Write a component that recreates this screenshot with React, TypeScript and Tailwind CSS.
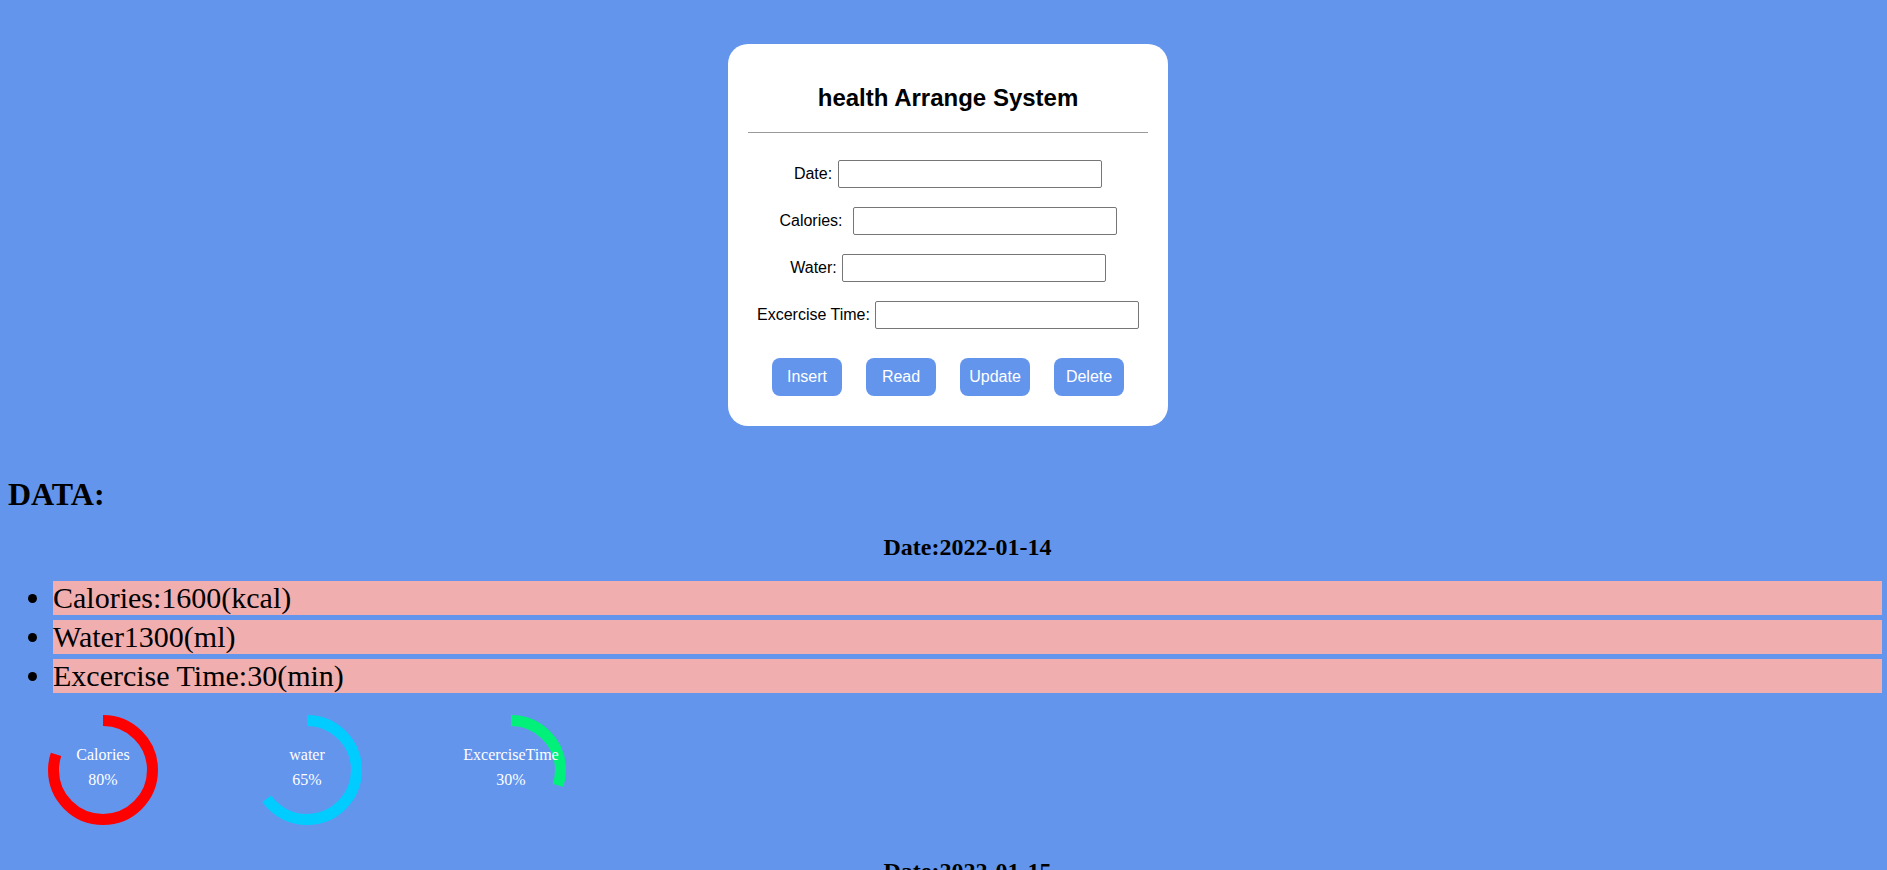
import React from 'react';

interface DayRecord {
  date: string;
  calories: number;
  water: number;
  exercise: number;
  rings: { label: string; percent: number; color: string }[];
}

const records: DayRecord[] = [
  {
    date: '2022-01-14',
    calories: 1600,
    water: 1300,
    exercise: 30,
    rings: [
      { label: 'Calories', percent: 80, color: '#ff0000' },
      { label: 'water', percent: 65, color: '#00ccff' },
      { label: 'ExcerciseTime', percent: 30, color: '#00f07a' },
    ],
  },
  {
    date: '2022-01-15',
    calories: 1800,
    water: 1500,
    exercise: 45,
    rings: [
      { label: 'Calories', percent: 90, color: '#ff0000' },
      { label: 'water', percent: 75, color: '#00ccff' },
      { label: 'ExcerciseTime', percent: 45, color: '#00f07a' },
    ],
  },
];

const fields = [
  { label: 'Date:', gap: 'ml-[6px]' },
  { label: 'Calories:', gap: 'ml-[10px]' },
  { label: 'Water:', gap: 'ml-[5px]' },
  { label: 'Excercise Time:', gap: 'ml-[5px]' },
];

const buttons = ['Insert', 'Read', 'Update', 'Delete'];

// 가운데에 라벨이 있는 원형 진행 링
function Ring({ label, percent, color }: { label: string; percent: number; color: string }) {
  const r = 49.5;
  const c = 2 * Math.PI * r;

  return (
    <div className="relative h-[110px] w-[110px]">
      <svg width="110" height="110" viewBox="0 0 110 110">
        <circle
          cx="55"
          cy="55"
          r={r}
          fill="none"
          stroke={color}
          strokeWidth="11"
          strokeDasharray={`${(c * percent) / 100} ${c}`}
          transform="rotate(-90 55 55)"
        />
      </svg>
      <div className="absolute inset-0 flex flex-col items-center justify-center pb-[6px] text-[16px] leading-[25px] whitespace-nowrap text-white">
        <span>{label}</span>
        <span>{percent}%</span>
      </div>
    </div>
  );
}

function DayBlock({ record, first }: { record: DayRecord; first: boolean }) {
  const items = [
    `Calories:${record.calories}(kcal)`,
    `Water${record.water}(ml)`,
    `Excercise Time:${record.exercise}(min)`,
  ];

  return (
    <section className={first ? 'mt-[20px]' : 'mt-[32px]'}>
      <h2 className="mr-[5px] ml-[53px] text-center text-[24px] leading-[28px] font-bold">Date:{record.date}</h2>
      <ul className="mt-[20px] mr-[5px] flex flex-col gap-[5px]">
        {items.map((item) => (
          <li key={item} className="flex items-center">
            <span className="flex w-[53px] justify-center pl-[24px] pr-[12px]">
              <span className="h-[9px] w-[9px] rounded-full bg-black" />
            </span>
            <span className="h-[34px] flex-1 bg-[#f1aeae] text-[30px] leading-[34px] text-black">{item}</span>
          </li>
        ))}
      </ul>
      <div className="mt-[22px] flex gap-[94px] pl-[48px]">
        {record.rings.map((ring) => (
          <Ring key={ring.label} {...ring} />
        ))}
      </div>
    </section>
  );
}

export default function App() {
  return (
    <div className="min-h-screen bg-[#6495ed] pt-[44px] pb-10 font-['Liberation_Serif','Times_New_Roman',serif] text-black">
      <div className="flex justify-center pl-[9px]">
        <div className="w-[440px] rounded-[20px] bg-white px-[20px] pt-[40px] pb-[30px] font-['Liberation_Sans',Arial,sans-serif]">
          <h2 className="text-center text-[24px] leading-[28px] font-bold">health Arrange System</h2>
          <hr className="mt-[20px] border-t border-[#9a9a9a]" />
          <form className="mt-[27px] flex flex-col gap-[19px]">
            {fields.map((f) => (
              <div key={f.label} className="flex h-[28px] items-center justify-center text-[16px] leading-[18px]">
                <label>{f.label}</label>
                <input
                  type="text"
                  className={`${f.gap} h-[28px] w-[264px] rounded-[2px] border border-[#767676] bg-white`}
                />
              </div>
            ))}
          </form>
          <div className="mt-[29px] flex justify-center gap-[24px]">
            {buttons.map((b) => (
              <button key={b} className="h-[38px] w-[70px] rounded-[8px] bg-[#6495ed] text-[16px] text-white">
                {b}
              </button>
            ))}
          </div>
        </div>
      </div>

      <h1 className="mt-[50px] ml-[8px] text-[32px] leading-[37px] font-bold">DATA:</h1>
      {records.map((record, i) => (
        <DayBlock key={record.date} record={record} first={i === 0} />
      ))}
    </div>
  );
}
